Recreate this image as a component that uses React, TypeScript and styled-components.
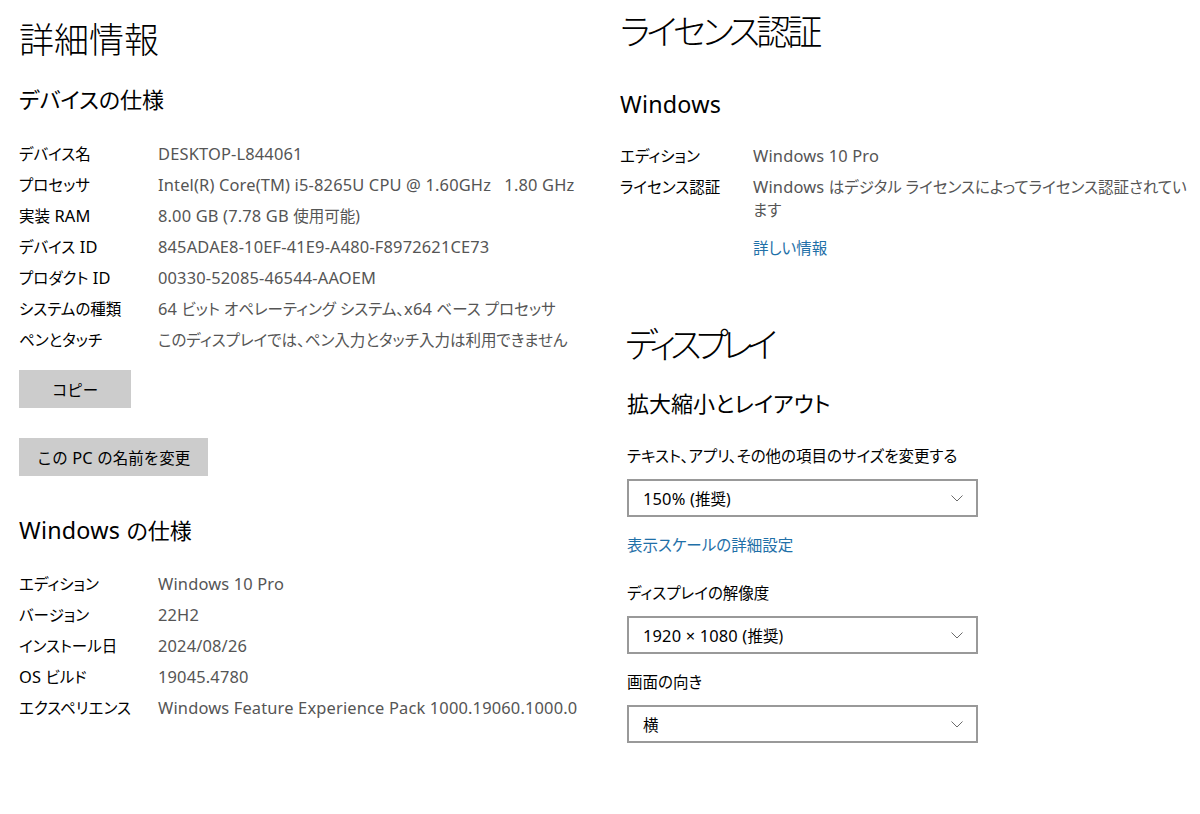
import React from "react";
import styled, { createGlobalStyle } from "styled-components";

const Global = createGlobalStyle`
  html, body { margin: 0; padding: 0; background: #ffffff; }
  body {
    font-family: "Noto Sans", "Noto Sans CJK JP", sans-serif;
    font-feature-settings: "palt";
    color: #000;
  }
`;

const Page = styled.div`
  width: 1200px;
  height: 814px;
  display: grid;
  grid-template-columns: 601px 1fr;
  overflow: hidden;
`;

const Column = styled.div<{ $top: number; $left: number }>`
  display: flex;
  flex-direction: column;
  align-items: flex-start;
  padding-top: ${(p) => p.$top}px;
  padding-left: ${(p) => p.$left}px;
`;

const Latin = styled.span`
  font-size: 1.06em;
  letter-spacing: 0.01em;
  line-height: 1;
`;

const isLatin = (s: string) => /^[\u0000-\u007F\u00A0\u00D7]+$/.test(s) && /[A-Za-z0-9]/.test(s);

const Mixed = ({ text }: { text: string }) => (
  <>
    {text.split(/([\u0000-\u007F\u00A0\u00D7]+)/).map((part, i) =>
      part === "" ? null : isLatin(part) ? (
        <Latin key={i}>{part}</Latin>
      ) : (
        <React.Fragment key={i}>{part}</React.Fragment>
      )
    )}
  </>
);

const PageTitle = styled.h1<{ $mt?: number; $ml?: number; $ls?: number }>`
  margin: ${(p) => p.$mt ?? 0}px 0 0 ${(p) => p.$ml ?? 0}px;
  font-size: 35px;
  line-height: 40px;
  font-weight: 300;
  letter-spacing: ${(p) => p.$ls ?? 0}px;
  white-space: nowrap;
`;

const SectionTitle = styled.h2<{ $mt: number }>`
  margin: ${(p) => p.$mt}px 0 0 0;
  font-size: 22px;
  line-height: 30px;
  font-weight: 400;
  white-space: nowrap;
`;

const Table = styled.div<{ $mt: number }>`
  margin-top: ${(p) => p.$mt}px;
  display: flex;
  flex-direction: column;
`;

const Row = styled.div<{ $labelW: number }>`
  display: grid;
  grid-template-columns: ${(p) => p.$labelW}px auto;
  padding: 4px 0;
  font-size: 15.5px;
  line-height: 23px;
  white-space: nowrap;
`;

const Label = styled.span`
  color: #000;
`;

const Value = styled.span`
  color: #555;
`;

const Button = styled.button<{ $mt: number; $w: number }>`
  margin-top: ${(p) => p.$mt}px;
  width: ${(p) => p.$w}px;
  height: 38px;
  border: none;
  background: #cccccc;
  color: #000;
  font-family: inherit;
  font-size: 15.5px;
  padding: 0;
`;

const Link = styled.a<{ $mt: number; $ml?: number }>`
  margin-top: ${(p) => p.$mt}px;
  margin-left: ${(p) => p.$ml ?? 0}px;
  font-size: 15.5px;
  line-height: 23px;
  color: #1f70a8;
  text-decoration: none;
  white-space: nowrap;
`;

const Section = styled.div<{ $ml: number }>`
  display: flex;
  flex-direction: column;
  align-items: flex-start;
  margin-left: ${(p) => p.$ml}px;
`;

const FieldLabel = styled.div<{ $mt: number }>`
  margin-top: ${(p) => p.$mt}px;
  font-size: 15.5px;
  line-height: 23px;
  white-space: nowrap;
`;

const Select = styled.div<{ $mt: number }>`
  margin-top: ${(p) => p.$mt}px;
  box-sizing: border-box;
  width: 351px;
  height: 38px;
  border: 2px solid #999;
  display: flex;
  align-items: center;
  justify-content: space-between;
  padding: 0 13px 0 14px;
  font-size: 15.5px;
  color: #000;
`;

const Chevron = () => (
  <svg width="12" height="7" viewBox="0 0 12 7" fill="none">
    <path d="M0.5 0.5 L6 6 L11.5 0.5" stroke="#6b6b6b" strokeWidth="1" />
  </svg>
);

const deviceSpecs: [string, string][] = [
  ["デバイス名", "DESKTOP-L844061"],
  ["プロセッサ", "Intel(R) Core(TM) i5-8265U CPU @ 1.60GHz\u00a0\u00a0 1.80 GHz"],
  ["実装 RAM", "8.00 GB (7.78 GB 使用可能)"],
  ["デバイス ID", "845ADAE8-10EF-41E9-A480-F8972621CE73"],
  ["プロダクト ID", "00330-52085-46544-AAOEM"],
  ["システムの種類", "64 ビット オペレーティング システム、x64 ベース プロセッサ"],
  ["ペンとタッチ", "このディスプレイでは、ペン入力とタッチ入力は利用できません"],
];

const winSpecs: [string, string][] = [
  ["エディション", "Windows 10 Pro"],
  ["バージョン", "22H2"],
  ["インストール日", "2024/08/26"],
  ["OS ビルド", "19045.4780"],
  ["エクスペリエンス", "Windows Feature Experience Pack 1000.19060.1000.0"],
];

export default function App() {
  return (
    <Page>
      <Global />
      <Column $top={20} $left={19}>
        <PageTitle>詳細情報</PageTitle>
        <SectionTitle $mt={24}>デバイスの仕様</SectionTitle>
        <Table $mt={25}>
          {deviceSpecs.map(([l, v]) => (
            <Row key={l} $labelW={139}>
              <Label><Mixed text={l} /></Label>
              <Value><Mixed text={v} /></Value>
            </Row>
          ))}
        </Table>
        <Button $mt={14} $w={112}>コピー</Button>
        <Button $mt={30} $w={189}><Mixed text="この PC の名前を変更" /></Button>
        <SectionTitle $mt={39}><Mixed text="Windows の仕様" /></SectionTitle>
        <Table $mt={24}>
          {winSpecs.map(([l, v]) => (
            <Row key={l} $labelW={139}>
              <Label><Mixed text={l} /></Label>
              <Value><Mixed text={v} /></Value>
            </Row>
          ))}
        </Table>
      </Column>
      <Column $top={12} $left={19}>
        <PageTitle $ls={-4}>ライセンス認証</PageTitle>
        <SectionTitle $mt={37}><Mixed text="Windows" /></SectionTitle>
        <Table $mt={22}>
          <Row $labelW={133}>
            <Label>エディション</Label>
            <Value><Mixed text="Windows 10 Pro" /></Value>
          </Row>
          <Row $labelW={133}>
            <Label>ライセンス認証</Label>
            <Value>
              <Mixed text="Windows はデジタル ライセンスによってライセンス認証されてい" />
              <br />
              ます
            </Value>
          </Row>
        </Table>
        <Link $mt={11} $ml={133} href="#">詳しい情報</Link>
        <Section $ml={7}>
          <PageTitle $mt={65} $ml={-2} $ls={-6}>ディスプレイ</PageTitle>
          <SectionTitle $mt={23}>拡大縮小とレイアウト</SectionTitle>
          <FieldLabel $mt={27}>テキスト、アプリ、その他の項目のサイズを変更する</FieldLabel>
          <Select $mt={11}>
            <span><Mixed text="150% (推奨)" /></span>
            <Chevron />
          </Select>
          <Link $mt={17} href="#">表示スケールの詳細設定</Link>
          <FieldLabel $mt={25}>ディスプレイの解像度</FieldLabel>
          <Select $mt={11}>
            <span><Mixed text="1920 × 1080 (推奨)" /></span>
            <Chevron />
          </Select>
          <FieldLabel $mt={17}>画面の向き</FieldLabel>
          <Select $mt={11}>
            <span>横</span>
            <Chevron />
          </Select>
        </Section>
      </Column>
    </Page>
  );
}
